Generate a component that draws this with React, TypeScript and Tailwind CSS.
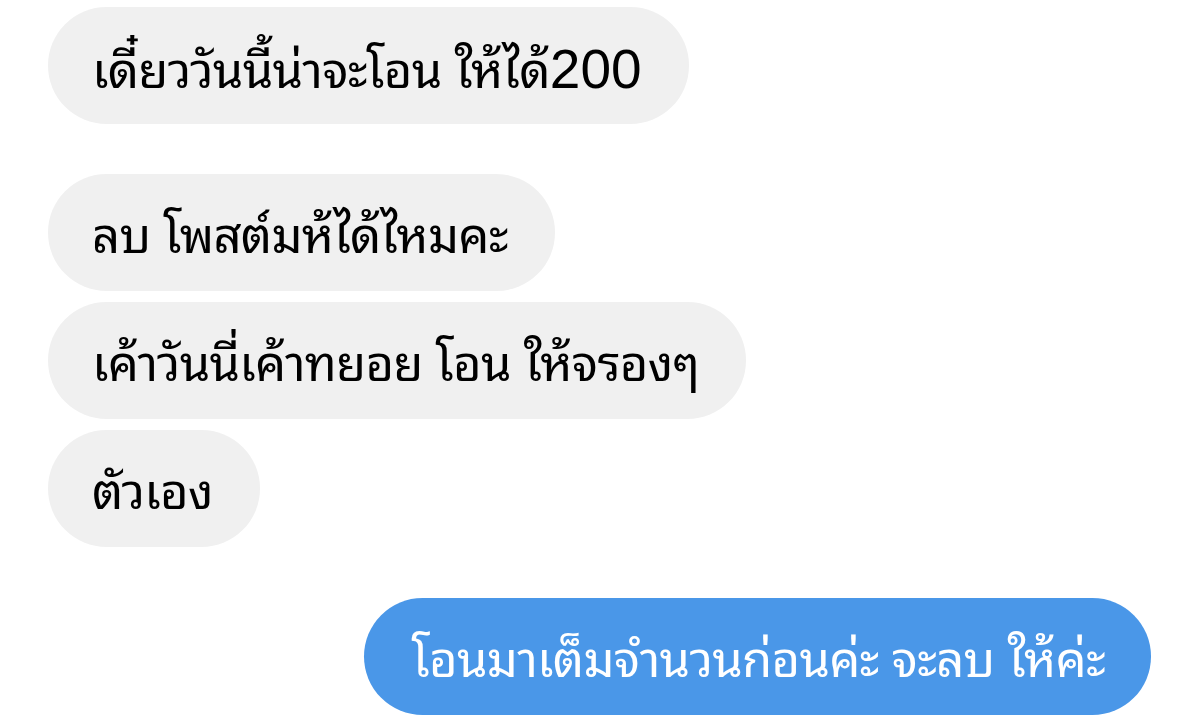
const font = {
  fontFamily: '"Liberation Sans", "Noto Sans Thai Looped", sans-serif',
};

function Bubble({ children, mine = false }: { children: React.ReactNode; mine?: boolean }) {
  return (
    <div
      className={
        mine
          ? "h-[117px] flex items-center rounded-full pl-[48px] pr-[46px] bg-[#4a97e8] text-white"
          : "h-[117px] flex items-center rounded-full pl-[44px] pr-[47px] bg-[#f0f0f0] text-black"
      }
    >
      <span className="text-[49px] leading-none tracking-[-0.015em] font-[380] whitespace-nowrap pt-[7px]">
        {children}
      </span>
    </div>
  );
}

export default function App() {
  return (
    <div className="w-[1199px] h-[720px] bg-white overflow-hidden" style={font}>
      <div className="flex flex-col px-[48px] pt-[7px]">
        <div className="flex">
          <Bubble>
            เดี๋ยววันนี้น่าจะโอน ให้ได้<span className="text-[55px] font-normal tracking-normal">200</span>
          </Bubble>
        </div>
        <div className="flex flex-col items-start gap-[11px] mt-[50px]">
          <Bubble>ลบ โพสต์มห้ได้ไหมคะ</Bubble>
          <Bubble>เค้าวันนี่เค้าทยอย โอน ให้จรองๆ</Bubble>
          <Bubble>ตัวเอง</Bubble>
        </div>
        <div className="flex justify-end mt-[51px]">
          <Bubble mine>โอนมาเต็มจำนวนก่อนค่ะ จะลบ ให้ค่ะ</Bubble>
        </div>
      </div>
    </div>
  );
}
